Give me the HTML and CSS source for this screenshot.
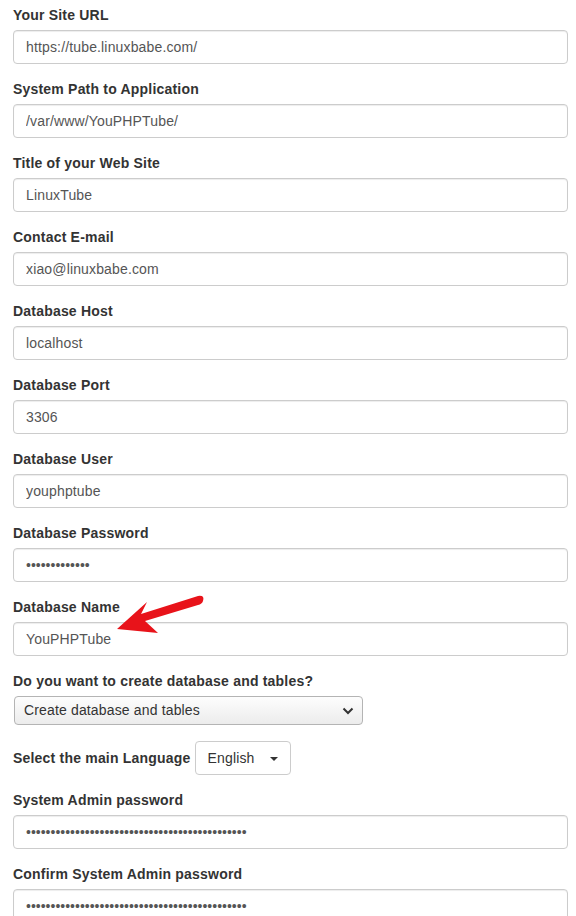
FILE: index.html
```html
<!DOCTYPE html>
<html>
<head>
<meta charset="utf-8">
<link rel="stylesheet" href="styles.css">
</head>
<body>
<form class="form">
  <div class="group">
    <label class="lbl">Your Site URL</label>
    <input class="field" type="text" value="https://tube.linuxbabe.com/">
  </div>
  <div class="group">
    <label class="lbl">System Path to Application</label>
    <input class="field" type="text" value="/var/www/YouPHPTube/">
  </div>
  <div class="group">
    <label class="lbl">Title of your Web Site</label>
    <input class="field" type="text" value="LinuxTube">
  </div>
  <div class="group">
    <label class="lbl">Contact E-mail</label>
    <input class="field" type="text" value="xiao@linuxbabe.com">
  </div>
  <div class="group">
    <label class="lbl">Database Host</label>
    <input class="field" type="text" value="localhost">
  </div>
  <div class="group">
    <label class="lbl">Database Port</label>
    <input class="field" type="text" value="3306">
  </div>
  <div class="group">
    <label class="lbl">Database User</label>
    <input class="field" type="text" value="youphptube">
  </div>
  <div class="group">
    <label class="lbl">Database Password</label>
    <input class="field pw" type="password" value="passwordpass1">
  </div>
  <div class="group">
    <label class="lbl">Database Name</label>
    <input class="field" type="text" value="YouPHPTube">
  </div>
  <div class="group sel-group">
    <label class="lbl">Do you want to create database and tables?</label>
    <div class="select">Create database and tables
      <svg class="chev" width="12" height="8" viewBox="0 0 12 8"><path d="M1.5 1.5 L6 6 L10.5 1.5" fill="none" stroke="#333" stroke-width="2"/></svg>
    </div>
  </div>
  <div class="group row">
    <label class="lbl inline">Select the main Language</label>
    <div class="btn">English<span class="caret"></span></div>
  </div>
  <div class="group">
    <label class="lbl">System Admin password</label>
    <input class="field pw" type="password" value="passwordpasswordpasswordpasswordpasswordpassw">
  </div>
  <div class="group">
    <label class="lbl">Confirm System Admin password</label>
    <input class="field pw" type="password" value="passwordpasswordpasswordpasswordpasswordpassw">
  </div>
</form>
<svg class="arrow" width="576" height="916" viewBox="0 0 576 916">
  <path d="M117 629 L147 602 L141 614 L198 596 Q205 595 203 601 Q202 604 198 605 L145 621 L158 633 Z" fill="#e8131a"/>
</svg>
</body>
</html>
```
FILE: styles.css
```css
html, body {
  margin: 0;
  padding: 0;
  background: #fff;
}
body {
  font-family: "Liberation Sans", Arial, sans-serif;
  font-size: 14px;
  line-height: 20px;
  color: #333;
  position: relative;
  overflow: hidden;
  height: 916px;
}
.form {
  padding: 5px 8px 0 13px;
}
.group {
  margin-bottom: 15px;
}
.lbl {
  display: block;
  font-weight: bold;
  margin-bottom: 5px;
  color: #333;
  letter-spacing: 0.2px;
}
.field {
  display: block;
  box-sizing: border-box;
  width: 100%;
  height: 34px;
  margin: 0;
  padding: 6px 12px;
  font-family: "Liberation Sans", Arial, sans-serif;
  font-size: 14px;
  line-height: 20px;
  letter-spacing: 0.15px;
  color: #555;
  background: #fff;
  border: 1px solid #ccc;
  border-radius: 4px;
  box-shadow: inset 0 1px 1px rgba(0,0,0,0.075);
  outline: none;
}
.field.pw {
  letter-spacing: 0;
}
.sel-group {
  margin-bottom: 16px;
}
.select {
  position: relative;
  box-sizing: border-box;
  width: 349px;
  height: 29px;
  margin-left: 1px;
  margin-top: 1px;
  padding: 3px 9px;
  line-height: 21px;
  letter-spacing: 0.15px;
  color: #333;
  border: 1px solid #b4b4b4;
  border-radius: 4px;
  background: linear-gradient(#fdfdfd, #ececec);
}
.chev {
  position: absolute;
  right: 8px;
  top: 10px;
}
.row {
  display: flex;
  align-items: center;
  gap: 4px;
  margin-bottom: 15px;
}
.lbl.inline {
  display: inline-block;
  margin-bottom: 0;
}
.btn {
  box-sizing: border-box;
  height: 34px;
  padding: 6px 12px;
  line-height: 20px;
  white-space: nowrap;
  letter-spacing: 0.15px;
  color: #333;
  background: #fff;
  border: 1px solid #ccc;
  border-radius: 4px;
}
.caret {
  display: inline-block;
  width: 0;
  height: 0;
  margin-left: 16px;
  vertical-align: middle;
  border-top: 4px solid #333;
  border-left: 4px solid transparent;
  border-right: 4px solid transparent;
}
.arrow {
  position: absolute;
  left: 0;
  top: 0;
  pointer-events: none;
}
```
